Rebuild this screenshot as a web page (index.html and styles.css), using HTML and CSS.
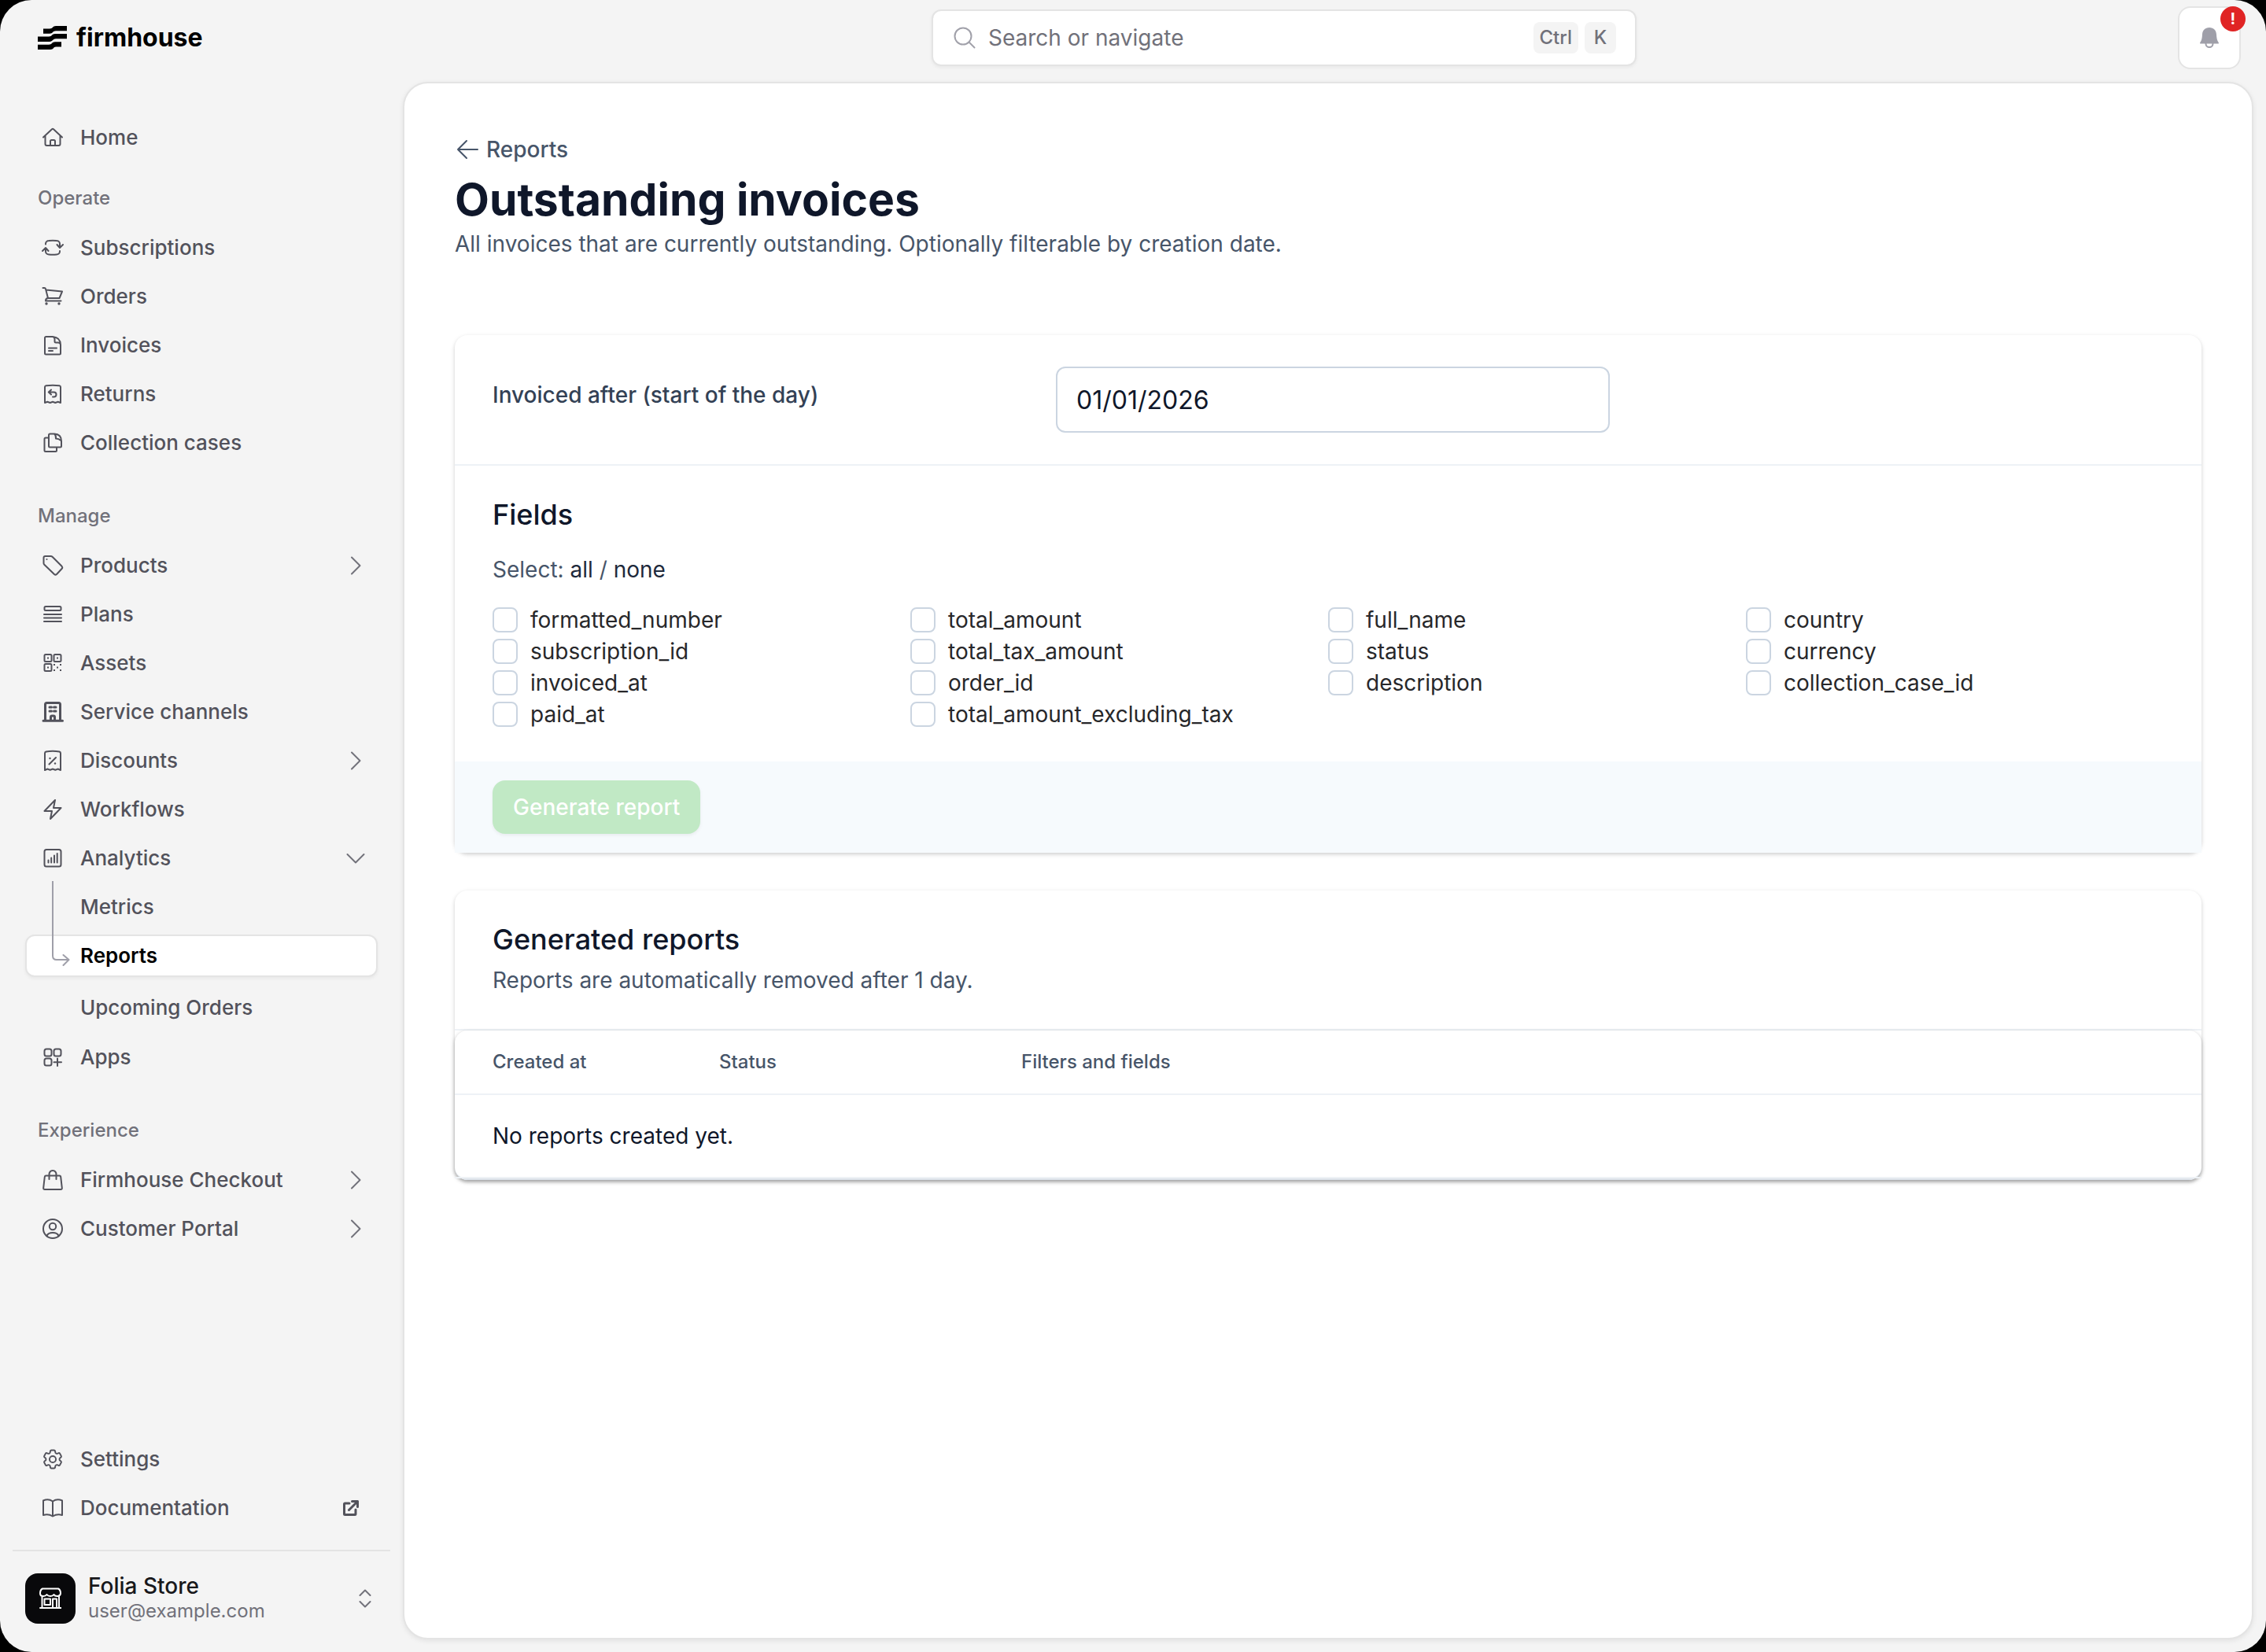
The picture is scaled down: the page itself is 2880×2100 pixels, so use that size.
FILE: index.html
```html
<!DOCTYPE html>
<html lang="en">
<head>
<meta charset="utf-8">
<title>Outstanding invoices</title>
<link rel="stylesheet" href="styles.css">
</head>
<body>
<svg class="sprite" aria-hidden="true">
  <symbol id="chev" viewBox="0 0 24 24"><path d="M7 1.500 17.500 12 7 22.500"/></symbol>
</svg>
<div class="app">
  <header class="topbar">
    <a class="brand" href="#" aria-label="firmhouse">
      <svg class="brand-mark" viewBox="0 0 37 30"><path d="M7 3.500h8c4 0 4-3.500 8-3.500h14v6.300H23c-4 0-4 3.500-8 3.500H7zM0 13.500h14c4 0 4-3.500 8-3.500h15v6.300H23c-4 0-4 3.700-8 3.700H0zM0 23.700h14c4 0 4-3.500 8-3.500h8v6.300h-7c-3 0-3 3.500-7 3.500H0z"/></svg>
      <span class="brand-name">firmhouse</span>
    </a>
    <label class="search">
      <svg class="search-icon" viewBox="0 0 28 28"><circle cx="12" cy="12" r="10.500"/><path d="m19.500 19.500 7 7"/></svg>
      <input class="search-input" type="text" placeholder="Search or navigate" aria-label="Search or navigate">
      <kbd class="key">Ctrl</kbd>
      <kbd class="key">K</kbd>
    </label>
    <button class="bell" type="button" aria-label="Notifications">
      <svg class="bell-icon" viewBox="0 0 24 26"><path d="M12 0C6.500 0 3.200 3.700 3 9c-.2 4.500-.8 7.500-2.700 10-.5.8 0 1.600 1 1.600h21.400c1 0 1.500-.8 1-1.600C21.800 16.500 21.200 13.500 21 9c-.2-5.300-3.500-9-9-9Z"/><path class="bell-clapper" d="M7.500 20.500a4.500 4.500 0 0 0 9 0"/></svg>
      <span class="bell-badge">!</span>
    </button>
  </header>

  <nav class="sidebar" aria-label="Main">
    <div class="nav-main">
      <ul class="nav-list">
        <li><a class="nav-item" href="#"><svg class="icon" viewBox="0 0 28 28"><path d="m2 13.500 11-10.300a1.500 1.500 0 0 1 2 0l11 10.300M4.500 11.500V22a2 2 0 0 0 2 2h15a2 2 0 0 0 2-2V11.500M11 24v-5.500a1.500 1.500 0 0 1 1.500-1.500h3a1.500 1.500 0 0 1 1.500 1.500V24"/></svg>Home</a></li>
      </ul>
      <h2 class="nav-title">Operate</h2>
      <ul class="nav-list">
        <li><a class="nav-item" href="#"><svg class="icon" viewBox="0 0 28 28"><path d="M5 9.500V9a4 4 0 0 1 4-4q5-.6 10 0a4 4 0 0 1 4 4v4.500M19.500 10l3.500 4 4-4M23 18v.5a4 4 0 0 1-4 4q-5 .6-10 0a4 4 0 0 1-4-4V14M1 18l4-4 3.500 4"/></svg>Subscriptions</a></li>
        <li><a class="nav-item" href="#"><svg class="icon" viewBox="0 0 28 28"><path d="M1.500 3h2q1.200 0 1.500 1.200L8 16M5.500 5.500 26 7.500 22.500 16H8q-3 0-3 3.500H24.500"/><circle class="dot" cx="6" cy="23" r="1.700"/><circle class="dot" cx="22" cy="23" r="1.700"/></svg>Orders</a></li>
        <li><a class="nav-item" href="#"><svg class="icon" viewBox="0 0 28 28"><path d="M5.500 3h8.500q10 1 10 10.500V24a1.500 1.500 0 0 1-1.500 1.500h-17A1.500 1.500 0 0 1 4 24V4.500A1.500 1.500 0 0 1 5.500 3ZM14 3q2.500.5 2.500 3v3q0 1.500 1.500 1.500h3q2.500 0 3 2.500M9 17.500h10M9 21h5"/></svg>Invoices</a></li>
        <li><a class="nav-item" href="#"><svg class="icon" viewBox="0 0 28 28"><path d="M4 25V5q0-1.500 1.500-1.800 8.500-1 17 0Q24 3.500 24 5v20l-3.300-1.200-3.400 1.200-3.300-1.200-3.300 1.200-3.400-1.200ZM12 8.500 8.800 11.500l3.200 3M9 11.500h6.500a3 3 0 0 1 0 6H14"/></svg>Returns</a></li>
        <li><a class="nav-item" href="#"><svg class="icon" viewBox="0 0 28 28"><path d="M10.500 2.500H16q9 .5 9 9V18q0 1.500-1.500 1.500h-13Q9 19.500 9 18V4q0-1.500 1.500-1.500ZM16 2.500q2.500 2 2 6 3.500 0 6.500 2.500M9 7.500H5Q3.500 7.500 3.500 9v14.500Q3.500 25 5 25h12.500q1.500 0 1.500-1.500v-4"/></svg>Collection cases</a></li>
      </ul>
      <h2 class="nav-title nav-title-spaced">Manage</h2>
      <ul class="nav-list">
        <li><a class="nav-item" href="#"><svg class="icon" viewBox="0 0 28 28"><path d="M4.500 2h7q1.200 0 2 .8l12 12q1.500 1.700 0 3.200l-6.500 7q-1.500 1.200-3 0L3.300 12.700Q2.500 12 2.500 11V4q0-2 2-2Z"/><circle class="dot" cx="6.500" cy="6" r="1"/></svg>Products<svg class="chevron"><use href="#chev"/></svg></a></li>
        <li><a class="nav-item" href="#"><svg class="icon" viewBox="0 0 28 28"><rect x="3.500" y="4" width="21" height="5" rx="1.500"/><path d="M3 14h22M3 18.500h22M3 23h22"/></svg>Plans</a></li>
        <li><a class="nav-item" href="#"><svg class="icon" viewBox="0 0 28 28"><rect x="3.500" y="3" width="9" height="9" rx="1.500"/><rect x="15.500" y="3" width="9" height="9" rx="1.500"/><rect x="3.500" y="15" width="9" height="9" rx="1.500"/><path class="dot" d="M7 6.500h2v2H7zM19 6.500h2v2h-2zM7 18.500h2v2H7zM15 15h2v2h-2zM23 15h2v2h-2zM19 18.500h2v2h-2zM15 22h2v2h-2zM23 22h2v2h-2z"/></svg>Assets</a></li>
        <li><a class="nav-item" href="#"><svg class="icon icon-bold" viewBox="0 0 28 28"><path d="M4.500 25V4.500Q4.500 2.500 6.500 2.500h15q2 0 2 2V25M2 25.200h24.500M11.500 25v-4.500q0-1.500 1.500-1.500h2q1.500 0 1.500 1.500V25M10 8h2.500M15.500 8H18M10 13h2.500M15.500 13H18"/></svg>Service channels</a></li>
        <li><a class="nav-item" href="#"><svg class="icon" viewBox="0 0 28 28"><path d="M4 26V4.500Q4 3 5.500 2.500q8.500-1.500 17 0Q24 3 24 4.500V26l-3.300-1.500-3.400 1.200L14 24.500l-3.300 1.200-3.400-1.200ZM18 10l-8.500 8.500"/><circle class="dot" cx="10.500" cy="11" r="1.200"/><circle class="dot" cx="17" cy="17.500" r="1.200"/></svg>Discounts<svg class="chevron"><use href="#chev"/></svg></a></li>
        <li><a class="nav-item" href="#"><svg class="icon" viewBox="0 0 28 28"><path d="M17 2 3.500 16H13l-2 10L24.500 12H15Z"/></svg>Workflows</a></li>
        <li><a class="nav-item" href="#"><svg class="icon" viewBox="0 0 28 28"><rect x="3.500" y="3" width="21" height="21.500" rx="2.500"/><path d="M8.500 19.500v-3M12.200 19.500v-6M16 19.500v-9M19.700 19.500V8"/></svg>Analytics<svg class="chevron chevron-open"><use href="#chev"/></svg></a>
          <ul class="nav-list sub-list">
            <li><a class="nav-item sub-item" href="#">Metrics</a></li>
            <li><a class="nav-item sub-item is-active" href="#" aria-current="page">Reports</a></li>
            <li><a class="nav-item sub-item" href="#">Upcoming Orders</a></li>
          </ul>
          <svg class="branch" viewBox="0 0 24 110"><path d="M2 0v95q0 5 5 5h15M15.500 94l7 6-7 7"/></svg>
        </li>
        <li><a class="nav-item" href="#"><svg class="icon" viewBox="0 0 28 28"><rect x="3.500" y="3.500" width="9" height="9" rx="2.500"/><rect x="15.500" y="3.500" width="9" height="9" rx="2.500"/><rect x="3.500" y="15.500" width="9" height="9" rx="2.500"/><path d="M20 15.500v9.500M15.500 20.200H25"/></svg>Apps</a></li>
      </ul>
      <h2 class="nav-title nav-title-spaced">Experience</h2>
      <ul class="nav-list">
        <li><a class="nav-item" href="#"><svg class="icon" viewBox="0 0 28 28"><path d="M5.500 8.500h17q1.500 0 1.700 1.500l1.600 14q.2 2-1.800 2H4q-2 0-1.800-2l1.600-14q.2-1.500 1.700-1.500ZM9.500 13V7.500Q9.500 2 14 2t4.500 5.500V13"/></svg>Firmhouse Checkout<svg class="chevron"><use href="#chev"/></svg></a></li>
        <li><a class="nav-item" href="#"><svg class="icon" viewBox="0 0 28 28"><circle cx="14" cy="14" r="12"/><circle cx="14" cy="11" r="4.200"/><path d="M6.500 23q1.500-4 7.500-4t7.500 4"/></svg>Customer Portal<svg class="chevron"><use href="#chev"/></svg></a></li>
      </ul>
    </div>
    <ul class="nav-list">
      <li><a class="nav-item" href="#"><svg class="icon" viewBox="1 1 22 22"><path class="gear" d="M9.594 3.940c.09-.542.560-.940 1.110-.940h2.593c.55 0 1.020.398 1.110.940l.213 1.281c.063.374.313.686.645.870.074.040.147.083.220.127.325.196.720.257 1.075.124l1.217-.456a1.125 1.125 0 0 1 1.370.490l1.296 2.247a1.125 1.125 0 0 1-.26 1.431l-1.003.827c-.293.241-.438.613-.430.992a7.723 7.723 0 0 1 0 .255c-.008.378.137.750.430.991l1.004.827c.424.350.534.955.260 1.430l-1.298 2.247a1.125 1.125 0 0 1-1.369.491l-1.217-.456c-.355-.133-.750-.072-1.076.124a6.470 6.470 0 0 1-.220.128c-.331.183-.581.495-.644.869l-.213 1.281c-.090.543-.560.940-1.110.940h-2.594c-.550 0-1.019-.398-1.110-.940l-.213-1.281c-.062-.374-.312-.686-.644-.870a6.520 6.520 0 0 1-.220-.127c-.325-.196-.720-.257-1.076-.124l-1.217.456a1.125 1.125 0 0 1-1.369-.490l-1.297-2.247a1.125 1.125 0 0 1 .260-1.431l1.004-.827c.292-.240.437-.613.430-.991a6.932 6.932 0 0 1 0-.255c.007-.380-.138-.751-.430-.992l-1.004-.827a1.125 1.125 0 0 1-.260-1.430l1.297-2.247a1.125 1.125 0 0 1 1.370-.491l1.216.456c.356.133.751.072 1.076-.124.072-.044.146-.086.220-.128.332-.183.582-.495.644-.869l.214-1.280Z"/><circle class="gear" cx="12" cy="12" r="3.200"/></svg>Settings</a></li>
      <li><a class="nav-item" href="#"><svg class="icon" viewBox="0 0 28 28"><path d="M14 5.500Q8.500 1.500 2 4.500V23q6.500-2 12 1.500Q19.500 21 26 23V4.500Q19.500 1.500 14 5.500ZM14 5.500v19"/></svg>Documentation<svg class="external" viewBox="0 0 20 20"><path d="M8 4H2.500Q1.500 4 1.500 5v12.500q0 1 1 1H15q1 0 1-1V12M11.500 1.500h7v7M18.500 1.500 7.500 12.500"/></svg></a></li>
    </ul>
    <button class="account" type="button">
      <span class="account-logo"><svg class="store" viewBox="0 0 28 28"><path d="M4 1.500h20q3 1.500 3 6-.5 3.500-4.500 3.500-3 0-4-2-1.500 2-4.500 2t-4.500-2q-1.500 2-4.500 2-4 0-4-3.500 0-4.500 3-6ZM3.500 11v15M25 11v15M1 26h27M6.500 14.500H14V22H6.500ZM17 26V14.500h5V26"/></svg></span>
      <span class="account-text"><span class="account-name">Folia Store</span><span class="account-mail">user@example.com</span></span>
      <svg class="updown" viewBox="0 0 16 24"><path d="m1.500 8 6.500-6.500L14.500 8M1.500 16l6.500 6.500 6.500-6.500"/></svg>
    </button>
  </nav>

  <main class="content">
    <header class="page-head">
      <a class="back" href="#"><svg class="back-icon" viewBox="0 0 28 28"><path d="M13 3 2 14l11 11M2 14h25"/></svg>Reports</a>
      <h1 class="page-title">Outstanding invoices</h1>
      <p class="page-lead">All invoices that are currently outstanding. Optionally filterable by creation date.</p>
    </header>

    <form class="card">
      <div class="filter">
        <label class="filter-label" for="after">Invoiced after (start of the day)</label>
        <input class="date" id="after" type="text" value="01/01/2026">
      </div>
      <div class="fields">
        <h2 class="card-title">Fields</h2>
        <p class="select-row">Select: <a href="#">all</a> / <a href="#">none</a></p>
        <div class="checks">
          <label class="check"><input type="checkbox">formatted_number</label>
          <label class="check"><input type="checkbox">subscription_id</label>
          <label class="check"><input type="checkbox">invoiced_at</label>
          <label class="check"><input type="checkbox">paid_at</label>
          <label class="check"><input type="checkbox">total_amount</label>
          <label class="check"><input type="checkbox">total_tax_amount</label>
          <label class="check"><input type="checkbox">order_id</label>
          <label class="check"><input type="checkbox">total_amount_excluding_tax</label>
          <label class="check"><input type="checkbox">full_name</label>
          <label class="check"><input type="checkbox">status</label>
          <label class="check check-last"><input type="checkbox">description</label>
          <label class="check"><input type="checkbox">country</label>
          <label class="check"><input type="checkbox">currency</label>
          <label class="check"><input type="checkbox">collection_case_id</label>
        </div>
      </div>
      <div class="actions"><button class="generate" type="submit" disabled>Generate report</button></div>
    </form>

    <section class="card">
      <div class="card-head">
        <h2 class="card-title">Generated reports</h2>
        <p class="card-lead">Reports are automatically removed after 1 day.</p>
      </div>
      <div class="table-wrap">
        <table class="reports">
          <thead><tr><th class="col-created">Created at</th><th class="col-status">Status</th><th>Filters and fields</th></tr></thead>
          <tbody><tr><td colspan="3">No reports created yet.</td></tr></tbody>
        </table>
      </div>
    </section>
  </main>
</div>
</body>
</html>
```
FILE: styles.css
```css
*, *::before, *::after { box-sizing: border-box; }

html { background: #000; }

body {
  margin: 0;
  font-family: Inter, "Liberation Sans", sans-serif;
  font-size: 28px;
  line-height: 40px;
  color: #27272a;
}

h1, h2, p, ul { margin: 0; padding: 0; }
ul { list-style: none; }
a { color: inherit; text-decoration: none; }
button, input { font: inherit; }
svg { flex: none; fill: none; stroke: currentColor; stroke-width: 2; stroke-linecap: round; stroke-linejoin: round; }
.sprite { position: absolute; width: 0; height: 0; }

.app {
  min-height: 100vh;
  display: grid;
  grid-template-columns: 512px minmax(0, 1fr);
  grid-template-rows: 104px 1fr;
  padding-right: 16px;
  padding-bottom: 16px;
  background: #f4f4f4;
  border-radius: 40px;
}

/* Top bar */
.topbar {
  grid-column: 1 / -1;
  display: grid;
  grid-template-columns: 464px minmax(0, 1fr) 96px;
  align-items: center;
  padding: 0 16px 8px 48px;
}
.brand { display: flex; align-items: center; gap: 12px; color: #000; }
.brand-mark { width: 37px; height: 30px; fill: currentColor; stroke: none; }
.brand-name { font-size: 32px; font-weight: 700; }
.search {
  display: flex;
  align-items: center;
  justify-self: center;
  gap: 8px;
  width: 100%;
  max-width: 896px;
  height: 72px;
  padding: 0 24px 0 26px;
  background: #fff;
  border: 2px solid #e4e4e4;
  border-radius: 12px;
  box-shadow: 0 2px 4px rgba(0, 0, 0, 0.05);
}
.search-icon { width: 28px; height: 28px; margin-right: 8px; color: #a1a1aa; }
.search-input { flex: 1; min-width: 0; padding: 0; border: 0; background: none; outline: 0; }
.search-input::placeholder { color: #71717a; opacity: 1; }
.key {
  min-width: 40px;
  padding: 0 8px;
  font-family: inherit;
  font-size: 24px;
  font-weight: 500;
  text-align: center;
  color: #71717a;
  background: #f4f4f4;
  border-radius: 8px;
}
.bell {
  position: relative;
  justify-self: end;
  display: grid;
  place-items: center;
  width: 80px;
  height: 80px;
  padding: 0;
  background: #fff;
  border: 2px solid #e4e4e4;
  border-radius: 16px;
  color: #9f9fa9;
}
.bell-icon { width: 24px; height: 26px; fill: currentColor; stroke: none; }
.bell-clapper { fill: none; stroke: currentColor; }
.bell-badge {
  position: absolute;
  top: -2px;
  right: -8px;
  width: 32px;
  height: 32px;
  border-radius: 50%;
  background: #e02424;
  color: #fff;
  font-size: 20px;
  font-weight: 700;
  line-height: 32px;
}

/* Sidebar */
.sidebar { display: flex; flex-direction: column; color: #52525b; }
.nav-main { flex: 1; padding-top: 40px; }
.nav-list { padding: 0 32px; }
.nav-list li { position: relative; }
.nav-item {
  display: flex;
  align-items: center;
  height: 62px;
  padding: 0 16px 0 21px;
  font-size: 26px;
  font-weight: 500;
}
.icon { width: 28px; height: 28px; margin-right: 21px; }
.icon-bold { stroke-width: 3; }
.gear { stroke-width: 1.5; }
.dot { fill: currentColor; stroke: none; }
.nav-title {
  padding: 0 48px;
  margin: 26px 0 12px;
  font-size: 24px;
  font-weight: 500;
  line-height: 40px;
  color: #71717a;
}
.nav-title-spaced { margin-top: 42px; }
.chevron { width: 24px; height: 24px; margin-left: auto; color: #71717a; }
.chevron-open { transform: rotate(90deg); }
.external { width: 20px; height: 20px; margin: 0 8px 0 auto; stroke-width: 3; }
.sub-list { padding: 0 0 1px; }
.sub-item { padding-left: 70px; }
.is-active {
  height: 54px;
  margin: 4px 0 8px;
  padding-left: 68px;
  background: #fff;
  border: 2px solid #e4e4e4;
  border-radius: 12px;
  box-shadow: 0 2px 4px rgba(0, 0, 0, 0.05);
  color: #000;
  font-weight: 600;
}
.branch { position: absolute; top: 60px; left: 33px; width: 24px; height: 110px; color: #9f9fa9; }
.account {
  display: flex;
  align-items: center;
  margin: 22px 16px 0;
  padding: 28px 24px 20px 16px;
  border: 0;
  border-top: 2px solid #e4e4e4;
  background: none;
  text-align: left;
}
.account-logo { display: grid; place-items: center; width: 64px; height: 64px; border-radius: 16px; background: #09090b; color: #fff; }
.store { width: 28px; height: 28px; }
.account-text { display: flex; flex: 1; flex-direction: column; margin-left: 16px; }
.account-name { font-weight: 500; line-height: 32px; color: #18181b; }
.account-mail { font-size: 24px; line-height: 32px; color: #71717a; }
.updown { width: 16px; height: 24px; color: #71717a; }

/* Page */
.content {
  padding: 64px;
  background: #fff;
  border: 2px solid #e4e4e4;
  border-radius: 32px;
  box-shadow: 0 2px 6px rgba(0, 0, 0, 0.08);
}
.page-head { margin-bottom: 96px; }
.back { display: flex; align-items: center; gap: 10px; padding-left: 2px; font-weight: 500; color: #475569; }
.back-icon { width: 28px; height: 28px; }
.page-title { margin-top: 8px; font-size: 57px; font-weight: 700; line-height: 72px; color: #0f172a; }
.page-lead { line-height: 40px; color: #475569; }

.card {
  margin-bottom: 48px;
  background: #fff;
  border-radius: 16px;
  box-shadow: 0 2px 6px rgba(0, 0, 0, 0.1), 0 2px 4px rgba(0, 0, 0, 0.1);
}
.filter {
  display: grid;
  grid-template-columns: 716px 704px;
  align-items: start;
  padding: 40px 48px;
  border-bottom: 2px solid #eef2f6;
}
.filter-label { margin-top: 16px; font-weight: 500; color: #334155; }
.date {
  height: 84px;
  padding: 0 24px;
  border: 2px solid #cbd5e1;
  border-radius: 12px;
  background: #fff;
  font-size: 32px;
  color: #0f172a;
}
.fields { padding: 34px 48px 40px; }
.card-title { font-size: 36px; font-weight: 500; line-height: 56px; color: #0f172a; }
.select-row { margin: 22px 0 24px; color: #475569; }
.select-row a { color: #1e293b; }
.checks {
  display: grid;
  grid-auto-flow: column;
  grid-template-rows: repeat(4, 40px);
  grid-template-columns: repeat(4, 1fr);
}
.check { display: flex; align-items: center; gap: 16px; }
.check-last { grid-row-end: span 2; align-self: start; }
.check input {
  appearance: none;
  width: 32px;
  height: 32px;
  margin: 0;
  border: 2px solid #cbd5e1;
  border-radius: 8px;
  background: #fff;
}
.actions { padding: 24px 48px; background: #f6fafd; }
.generate {
  display: block;
  height: 68px;
  padding: 0 26px;
  border: 0;
  border-radius: 16px;
  background: #c1e9c5;
  color: #fff;
  font-weight: 500;
  box-shadow: 0 2px 4px rgba(0, 0, 0, 0.06);
}
.card-head { padding: 34px 48px 42px; border-bottom: 2px solid #eef2f6; }
.card-lead { margin-top: 4px; color: #475569; }
.table-wrap {
  border-bottom: 2px solid #dde3ea;
  border-radius: 16px;
  box-shadow: 0 2px 6px rgba(0, 0, 0, 0.15), 0 2px 4px rgba(0, 0, 0, 0.15);
}
.reports { width: 100%; border-spacing: 0; }
.reports th, .reports td { padding: 0 48px; border-bottom: 2px solid #eef2f6; text-align: left; }
.reports th { height: 82px; font-size: 24px; font-weight: 500; color: #475569; }
.reports th + th { padding-left: 48px; }
.reports td { height: 106px; color: #0f172a; }
.col-created { width: 288px; }
.col-status { width: 384px; }
```
